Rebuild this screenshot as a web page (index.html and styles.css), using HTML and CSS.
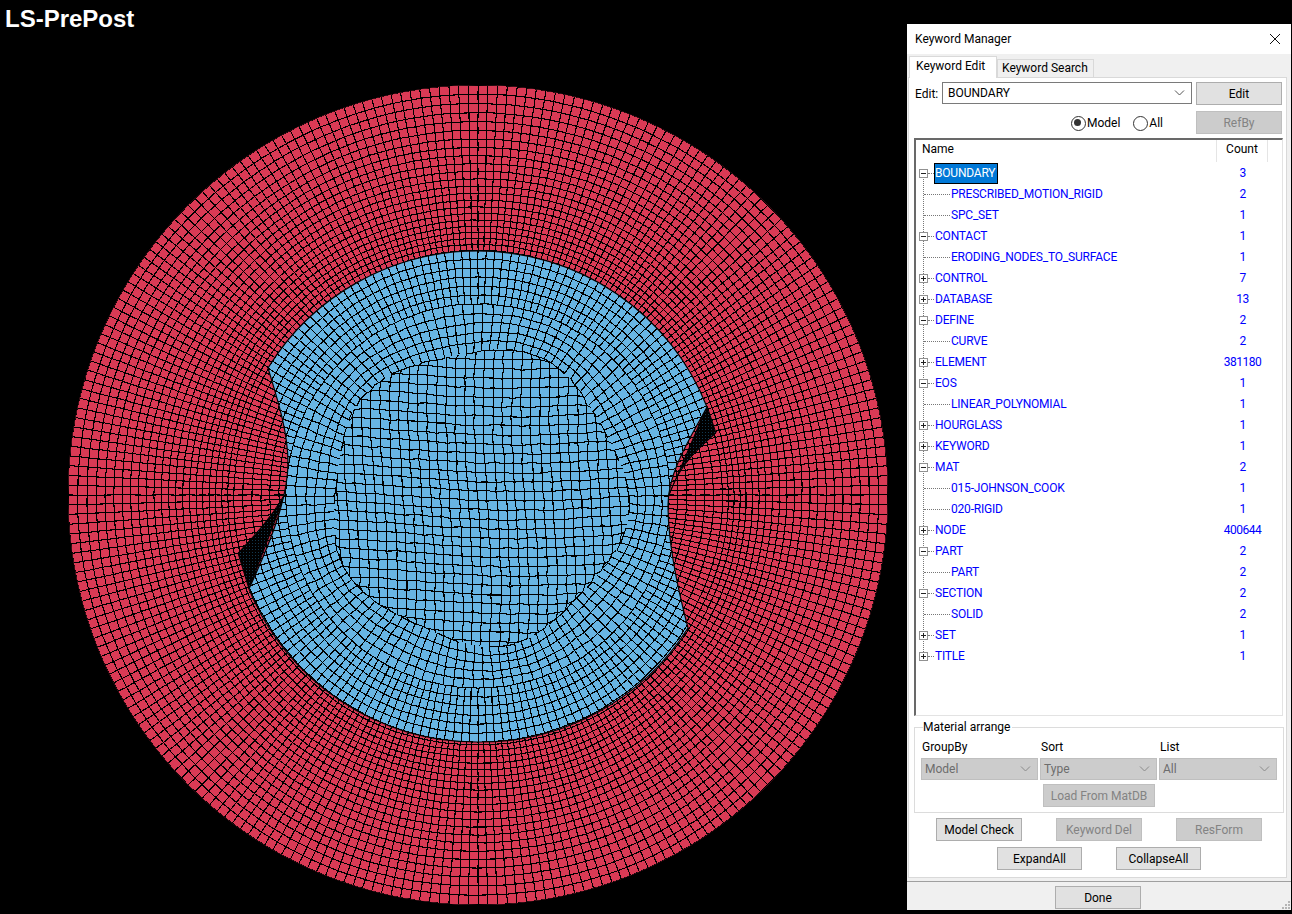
FILE: index.html

```html
<!DOCTYPE html>
<html lang="en">
<head>
    <meta charset="UTF-8">
    <title>LS-PrePost</title>
    <link rel="stylesheet" href="styles.css">
</head>
<body>
    <div class="viewer">
        <div class="app-title">LS-PrePost</div>
        <svg class="mesh" width="907" height="914" viewBox="0 0 907 914">
            <defs>
                <clipPath id="disc-clip"><circle cx="478" cy="495" r="410"/></clipPath>
                <clipPath id="core-clip"><path id="core-clip-path"/></clipPath>
                <pattern id="wedge-hatch" width="3" height="3" patternUnits="userSpaceOnUse">
                    <rect width="3" height="3" fill="#000"/>
                    <rect width="1" height="1" fill="#14384e"/>
                </pattern>
            </defs>
            <circle cx="478" cy="495" r="410" fill="#da3a55"/>
            <path id="ring-lines" class="mesh-lines" clip-path="url(#disc-clip)"/>
            <path id="wedge-left" class="wedge"/>
            <path id="wedge-right" class="wedge"/>
            <path id="core-fill" fill="#68b5e4"/>
            <path id="core-lines" class="mesh-lines" clip-path="url(#core-clip)"/>
            <path id="core-edge" class="core-edge"/>
        </svg>
    </div>

    <div class="dialog">
        <div class="titlebar">
            <span>Keyword Manager</span>
            <svg class="close" width="12" height="12" viewBox="0 0 12 12"><path d="M1 1L11 11M11 1L1 11" stroke="#111" fill="none"/></svg>
        </div>
        <div class="tabs">
            <div class="tab active">Keyword Edit</div>
            <div class="tab">Keyword Search</div>
        </div>
        <div class="pane">
            <div class="row-edit">
                <span class="edit-label">Edit:</span>
                <div class="combo combo-main">
                    <span>BOUNDARY</span>
                    <svg class="chev" width="11" height="6" viewBox="0 0 11 6"><path d="M1 0.5L5.5 5L10 0.5" fill="none" stroke="#555"/></svg>
                </div>
                <button class="btn btn-side">Edit</button>
            </div>
            <div class="row-filter">
                <label class="radio checked">Model</label>
                <label class="radio radio-all">All</label>
                <button class="btn btn-side" disabled>RefBy</button>
            </div>

            <div class="list">
                <div class="list-head">
                    <div class="col-name">Name</div>
                    <div class="col-count">Count</div>
                </div>
                <div class="tree">
                    <div class="node open"><span class="box"></span><span class="name selected">BOUNDARY</span><span class="count">3</span></div>
                    <div class="node child"><span class="name">PRESCRIBED_MOTION_RIGID</span><span class="count">2</span></div>
                    <div class="node child"><span class="name">SPC_SET</span><span class="count">1</span></div>
                    <div class="node open"><span class="box"></span><span class="name">CONTACT</span><span class="count">1</span></div>
                    <div class="node child"><span class="name">ERODING_NODES_TO_SURFACE</span><span class="count">1</span></div>
                    <div class="node closed"><span class="box"></span><span class="name">CONTROL</span><span class="count">7</span></div>
                    <div class="node closed"><span class="box"></span><span class="name">DATABASE</span><span class="count">13</span></div>
                    <div class="node open"><span class="box"></span><span class="name">DEFINE</span><span class="count">2</span></div>
                    <div class="node child"><span class="name">CURVE</span><span class="count">2</span></div>
                    <div class="node closed"><span class="box"></span><span class="name">ELEMENT</span><span class="count">381180</span></div>
                    <div class="node open"><span class="box"></span><span class="name">EOS</span><span class="count">1</span></div>
                    <div class="node child"><span class="name">LINEAR_POLYNOMIAL</span><span class="count">1</span></div>
                    <div class="node closed"><span class="box"></span><span class="name">HOURGLASS</span><span class="count">1</span></div>
                    <div class="node closed"><span class="box"></span><span class="name">KEYWORD</span><span class="count">1</span></div>
                    <div class="node open"><span class="box"></span><span class="name">MAT</span><span class="count">2</span></div>
                    <div class="node child"><span class="name">015-JOHNSON_COOK</span><span class="count">1</span></div>
                    <div class="node child"><span class="name">020-RIGID</span><span class="count">1</span></div>
                    <div class="node closed"><span class="box"></span><span class="name">NODE</span><span class="count">400644</span></div>
                    <div class="node open"><span class="box"></span><span class="name">PART</span><span class="count">2</span></div>
                    <div class="node child"><span class="name">PART</span><span class="count">2</span></div>
                    <div class="node open"><span class="box"></span><span class="name">SECTION</span><span class="count">2</span></div>
                    <div class="node child"><span class="name">SOLID</span><span class="count">2</span></div>
                    <div class="node closed"><span class="box"></span><span class="name">SET</span><span class="count">1</span></div>
                    <div class="node closed"><span class="box"></span><span class="name">TITLE</span><span class="count">1</span></div>
                </div>
            </div>

            <div class="group">
                <div class="group-title">Material arrange</div>
                <div class="group-grid">
                    <span>GroupBy</span>
                    <span>Sort</span>
                    <span>List</span>
                    <div class="combo disabled"><span>Model</span><svg class="chev" width="11" height="6" viewBox="0 0 11 6"><path d="M1 0.5L5.5 5L10 0.5" fill="none" stroke="#8a8a8a"/></svg></div>
                    <div class="combo disabled"><span>Type</span><svg class="chev" width="11" height="6" viewBox="0 0 11 6"><path d="M1 0.5L5.5 5L10 0.5" fill="none" stroke="#8a8a8a"/></svg></div>
                    <div class="combo disabled"><span>All</span><svg class="chev" width="11" height="6" viewBox="0 0 11 6"><path d="M1 0.5L5.5 5L10 0.5" fill="none" stroke="#8a8a8a"/></svg></div>
                </div>
                <button class="btn btn-matdb" disabled>Load From MatDB</button>
            </div>

            <div class="actions">
                <button class="btn btn-action">Model Check</button>
                <button class="btn btn-action" disabled>Keyword Del</button>
                <button class="btn btn-action" disabled>ResForm</button>
            </div>
            <div class="actions actions-small">
                <button class="btn btn-expand">ExpandAll</button>
                <button class="btn btn-expand">CollapseAll</button>
            </div>
        </div>
        <div class="footer">
            <button class="btn btn-action">Done</button>
            <svg class="grip" width="9" height="9" viewBox="0 0 9 9"><path d="M7 1h2v2H7zM4 4h2v2H4zM7 4h2v2H7zM1 7h2v2H1zM4 7h2v2H4zM7 7h2v2H7z" fill="#b5b5b5"/></svg>
        </div>
    </div>
    <script src="script.js"></script>
</body>
</html>
```

FILE: styles.css

```css
* {
    box-sizing: border-box;
}
html, body {
    height: 100%;
}
body {
    margin: 0;
    display: flex;
    overflow: hidden;
    background-color: #000;
    font-family: Roboto, "Noto Sans", sans-serif;
    font-size: 12px;
    color: #000;
}
.viewer {
    position: relative;
    width: 907px;
    height: 914px;
}
.mesh {
    display: block;
}
.app-title {
    position: absolute;
    left: 5px;
    top: 5px;
    font-family: "Liberation Sans", Arial, sans-serif;
    font-size: 24px;
    font-weight: bold;
    line-height: 28px;
    color: #fff;
}
.mesh-lines {
    fill: none;
    stroke: #000;
    stroke-width: 1.1;
    shape-rendering: crispEdges;
}
.core-edge {
    fill: none;
    stroke: #000;
    stroke-width: 1.2;
}
.wedge {
    fill: url(#wedge-hatch);
    stroke: #000;
}

.dialog {
    width: 384px;
    height: 886px;
    margin-top: 24px;
    background-color: #f0f0f0;
    display: flex;
    flex-direction: column;
}
.titlebar {
    height: 30px;
    padding: 0 10px 0 8px;
    background-color: #fff;
    display: flex;
    align-items: center;
    justify-content: space-between;
}
.tabs {
    height: 22px;
    margin-top: 1px;
    padding-left: 2px;
    display: flex;
    align-items: flex-end;
}
.tab {
    height: 18px;
    padding: 0 4px;
    width: 97px;
    background-color: #f0f0f0;
    border: 1px solid #d9d9d9;
    border-bottom: none;
    line-height: 17px;
}
.tab.active {
    height: 22px;
    width: 88px;
    padding: 0 6px;
    background-color: #fff;
    line-height: 19px;
    position: relative;
    top: 1px;
}
.pane {
    height: 801px;
    width: 379px;
    margin-left: 1px;
    padding: 4px 3px 0 5px;
    background-color: #fff;
    border: 1px solid #d9d9d9;
}
.row-edit, .row-filter {
    display: flex;
    align-items: center;
    height: 23px;
}
.edit-label {
    margin-left: 1px;
    width: 27px;
}
.combo {
    height: 22px;
    padding: 0 6px 0 5px;
    display: flex;
    align-items: center;
    justify-content: space-between;
    border: 1px solid #7a7a7a;
    background-color: #fff;
}
.combo-main {
    width: 250px;
    margin-right: 4px;
    align-self: flex-start;
}
.combo.disabled {
    background-color: #cccccc;
    border-color: #bfbfbf;
    color: #6d6d6d;
    padding-left: 3px;
}
.btn {
    height: 23px;
    padding: 0;
    font: inherit;
    color: #000;
    background-color: #e1e1e1;
    border: 1px solid #adadad;
}
.btn:disabled {
    background-color: #cccccc;
    border-color: #bfbfbf;
    color: #838383;
}
.btn-side {
    width: 86px;
}
.row-filter {
    margin-top: 6px;
    padding-right: 1px;
    justify-content: flex-end;
}
.radio {
    display: flex;
    align-items: center;
    position: relative;
    padding-left: 16px;
}
.radio::before {
    content: "";
    position: absolute;
    left: 0;
    top: 50%;
    margin-top: -6.5px;
    width: 13px;
    height: 13px;
    border: 1px solid #333;
    border-radius: 50%;
    background-color: #fff;
}
.radio.checked::after {
    content: "";
    position: absolute;
    left: 3px;
    top: 50%;
    margin-top: -3.5px;
    width: 7px;
    height: 7px;
    border-radius: 50%;
    background-color: #333;
}
.radio-all {
    margin-left: 13px;
    margin-right: 33px;
}

.list {
    height: 578px;
    width: 369px;
    margin-top: 4px;
    border: 1px solid #a0a0a0;
    border-top: 2px solid #696969;
    border-left: 2px solid #696969;
    border-right-color: #e3e3e3;
    border-bottom-color: #e3e3e3;
}
.list-head {
    display: flex;
    height: 23px;
    line-height: 19px;
}
.col-name {
    width: 301px;
    height: 22px;
    padding-left: 6px;
    border-right: 1px solid #e5e5e5;
}
.col-count {
    width: 51px;
    height: 22px;
    text-align: center;
    border-right: 1px solid #e5e5e5;
}
.tree {
    position: relative;
    color: #0000ff;
}
.tree::before {
    content: "";
    position: absolute;
    left: 7px;
    top: 10px;
    height: 483px;
    border-left: 1px dotted #777;
}
.node {
    position: relative;
    height: 21px;
    display: flex;
    align-items: center;
    padding-left: 19px;
}
.node.child {
    padding-left: 35px;
}
.node.child::before {
    content: "";
    position: absolute;
    left: 8px;
    top: 10px;
    width: 26px;
    border-top: 1px dotted #777;
}
.box {
    position: absolute;
    left: 3px;
    top: 6px;
    width: 9px;
    height: 9px;
    background-color: #fff;
    border: 1px solid #919191;
}
.box::before {
    content: "";
    position: absolute;
    left: 1px;
    top: 3px;
    width: 5px;
    height: 1px;
    background-color: #222;
}
.closed .box::after {
    content: "";
    position: absolute;
    left: 3px;
    top: 1px;
    width: 1px;
    height: 5px;
    background-color: #222;
}
.node.open::before, .node.closed::before {
    content: "";
    position: absolute;
    left: 12px;
    top: 10px;
    width: 6px;
    border-top: 1px dotted #777;
}
.name {
    height: 21px;
    line-height: 20px;
    letter-spacing: -0.2px;
}
.name.selected {
    width: 64px;
    margin-left: -1px;
    padding-left: 0;
    background-color: #0078d7;
    color: #fff;
    border: 1px solid #000;
    line-height: 18px;
}
.count {
    position: absolute;
    left: 301px;
    width: 51px;
    text-align: center;
    margin-top: -2px;
    letter-spacing: -0.5px;
}

.group {
    width: 370px;
    height: 86px;
    margin-top: 11px;
    padding: 0 6px;
    border: 1px solid #dcdcdc;
}
.group-title {
    width: fit-content;
    height: 16px;
    margin: -8px 0 0 2px;
    padding: 0 2px 0 0;
    line-height: 14px;
    background-color: #fff;
}
.group-grid {
    display: grid;
    grid-template-columns: 117px 117px 118px;
    grid-template-rows: 18px 22px;
    column-gap: 2px;
    margin-top: 4px;
}
.group-grid span {
    line-height: 15px;
    padding-left: 1px;
}
.combo.disabled span {
    padding-left: 0;
    line-height: 20px;
}
.btn-matdb {
    display: block;
    width: 112px;
    margin: 4px 0 0 122px;
}
.actions {
    display: flex;
    justify-content: center;
    gap: 34px;
    margin-top: 6px;
    width: 370px;
    padding-left: 0;
}
.group + .actions {
    margin-top: 5px;
}
.btn-action {
    width: 86px;
}
.btn-expand {
    width: 85px;
}
.footer {
    position: relative;
    margin-top: 3px;
    height: 29px;
    border-top: 1px solid #a0a0a0;
    display: flex;
    justify-content: center;
    align-items: flex-start;
    padding: 4px 2px 0 0;
}
.grip {
    position: absolute;
    right: 1px;
    bottom: 1px;
}
```

FILE: script.js

```js
// mesh picture: log-polar ring behind a blue disc made of polar bands and a middle grid
var cx = 478, cy = 495;
var coreCy = cy + 1;

// small seeded random so the mesh looks the same each time
var seed = 12345;
function rnd() {
    seed = (seed * 1664525 + 1013904223) % 4294967296;
    return seed / 4294967296;
}
function jitter(a) {
    return (rnd() - 0.5) * 2 * a;
}
function pt(p) {
    return p[0].toFixed(1) + ' ' + p[1].toFixed(1);
}
function polyline(points) {
    var d = 'M' + pt(points[0]);
    for (var i = 1; i < points.length; i++) d += 'L' + pt(points[i]);
    return d;
}

function buildRing() {
    var sectors = 264;
    var k = 2 * Math.PI / sectors;
    var radii = [];
    var r = 410;
    while (r > 185) {
        radii.push(r);
        r = r > 245 ? r / (1 + k) : r - 9;
    }

    var nodes = [];
    for (var j = 0; j < radii.length; j++) {
        var row = [];
        for (var i = 0; i < sectors; i++) {
            var t = i * k;
            var rr = radii[j] + (j == 0 ? 0 : Math.sin(t * 7 + j * 0.3) * 0.4 + jitter(0.2));
            var tt = t + jitter(0.0006);
            row.push([cx + rr * Math.cos(tt), cy + rr * Math.sin(tt)]);
        }
        nodes.push(row);
    }

    var d = '';
    for (var j = 0; j < nodes.length; j++) d += polyline(nodes[j].concat([nodes[j][0]]));
    for (var i = 0; i < sectors; i++) {
        var spoke = [];
        for (var j = 0; j < nodes.length; j++) spoke.push(nodes[j][i]);
        d += polyline(spoke);
    }
    return d;
}

// radius where the polar bands stop and the middle grid takes over
function innerLimit(t) {
    return 147 + 5 * Math.sin(5 * t + 1);
}

// inner band: its outer ring is the outer band's last one, its inner ring is broken up
function polarBand(rOuter, rInner, sectors, mess, inner) {
    var radii = [];
    for (var r = rOuter; r >= rInner; r -= 9) radii.push(r);
    var nodes = [];
    for (var j = 0; j < radii.length; j++) {
        var row = [];
        for (var i = 0; i < sectors; i++) {
            var t = i / sectors * 2 * Math.PI;
            var rr = radii[j] + jitter(mess);
            if (inner) {
                rr += (innerLimit(t) - 147) * (rOuter - radii[j]) / (rOuter - rInner);
            }
            var tt = t + jitter(mess) / radii[j];
            row.push([cx + rr * Math.cos(tt), coreCy + rr * Math.sin(tt)]);
        }
        nodes.push(row);
    }
    var d = '';
    for (var j = 0; j < nodes.length; j++) {
        if (inner && j == 0) continue;
        var ring = nodes[j];
        if (inner && j == nodes.length - 1) {
            for (var i = 0; i < sectors; i++) {
                if (rnd() < 0.6) d += polyline([ring[i], ring[(i + 1) % sectors]]);
            }
            continue;
        }
        d += polyline(ring.concat([ring[0]]));
    }
    for (var i = 0; i < sectors; i++) {
        var spoke = [];
        for (var j = 0; j < nodes.length; j++) spoke.push(nodes[j][i]);
        d += polyline(spoke);
    }
    return d;
}

function inside(p) {
    var dx = p[0] - cx, dy = p[1] - coreCy;
    return Math.sqrt(dx * dx + dy * dy) < innerLimit(Math.atan2(dy, dx));
}
// put a grid node that fell outside back on the limit
function snap(p) {
    var dx = p[0] - cx, dy = p[1] - coreCy;
    var t = Math.atan2(dy, dx);
    var r = innerLimit(t);
    return [cx + r * Math.cos(t), coreCy + r * Math.sin(t)];
}

function middleGrid() {
    var step = 9.4, half = 18;
    var nodes = [];
    for (var a = -half; a <= half; a++) {
        var row = [];
        for (var b = -half; b <= half; b++) {
            var x = a * step, y = b * step;
            row.push([
                cx + x + 4 * Math.sin(y / 60) + jitter(0.8),
                coreCy + y + 5 * Math.sin(x / 70 + 1) + jitter(0.8)
            ]);
        }
        nodes.push(row);
    }
    function segment(p, q) {
        var pIn = inside(p), qIn = inside(q);
        if (!pIn && !qIn) return '';
        return polyline([pIn ? p : snap(p), qIn ? q : snap(q)]);
    }
    var d = '';
    for (var a = 0; a < nodes.length; a++) {
        for (var b = 0; b < nodes.length; b++) {
            if (b + 1 < nodes.length) d += segment(nodes[a][b], nodes[a][b + 1]);
            if (a + 1 < nodes.length) d += segment(nodes[a][b], nodes[a + 1][b]);
        }
    }
    return d;
}

function buildCore() {
    return polarBand(246, 192, 184, 0.35, false) +
        polarBand(192, 147, 118, 0.7, true) +
        middleGrid();
}

var coreShape = 'M268 368 A246 246 0 0 1 478 251 A246 246 0 0 1 707 407 ' +
    'C694 432 668 470 668 505 C668 545 678 590 688 628 ' +
    'A246 246 0 0 1 478 742 A246 246 0 0 1 249 589 ' +
    'C262 560 288 505 288 463 C288 430 276 395 268 368Z';

document.getElementById('ring-lines').setAttribute('d', buildRing());
document.getElementById('core-lines').setAttribute('d', buildCore());
document.getElementById('core-fill').setAttribute('d', coreShape);
document.getElementById('core-edge').setAttribute('d', coreShape);
document.getElementById('core-clip-path').setAttribute('d', coreShape);
document.getElementById('wedge-left').setAttribute('d', 'M286 492 C270 520 250 540 238 553 L249 589Z');
document.getElementById('wedge-right').setAttribute('d', 'M707 406 L716 433 C695 452 680 465 669 495Z');
```
